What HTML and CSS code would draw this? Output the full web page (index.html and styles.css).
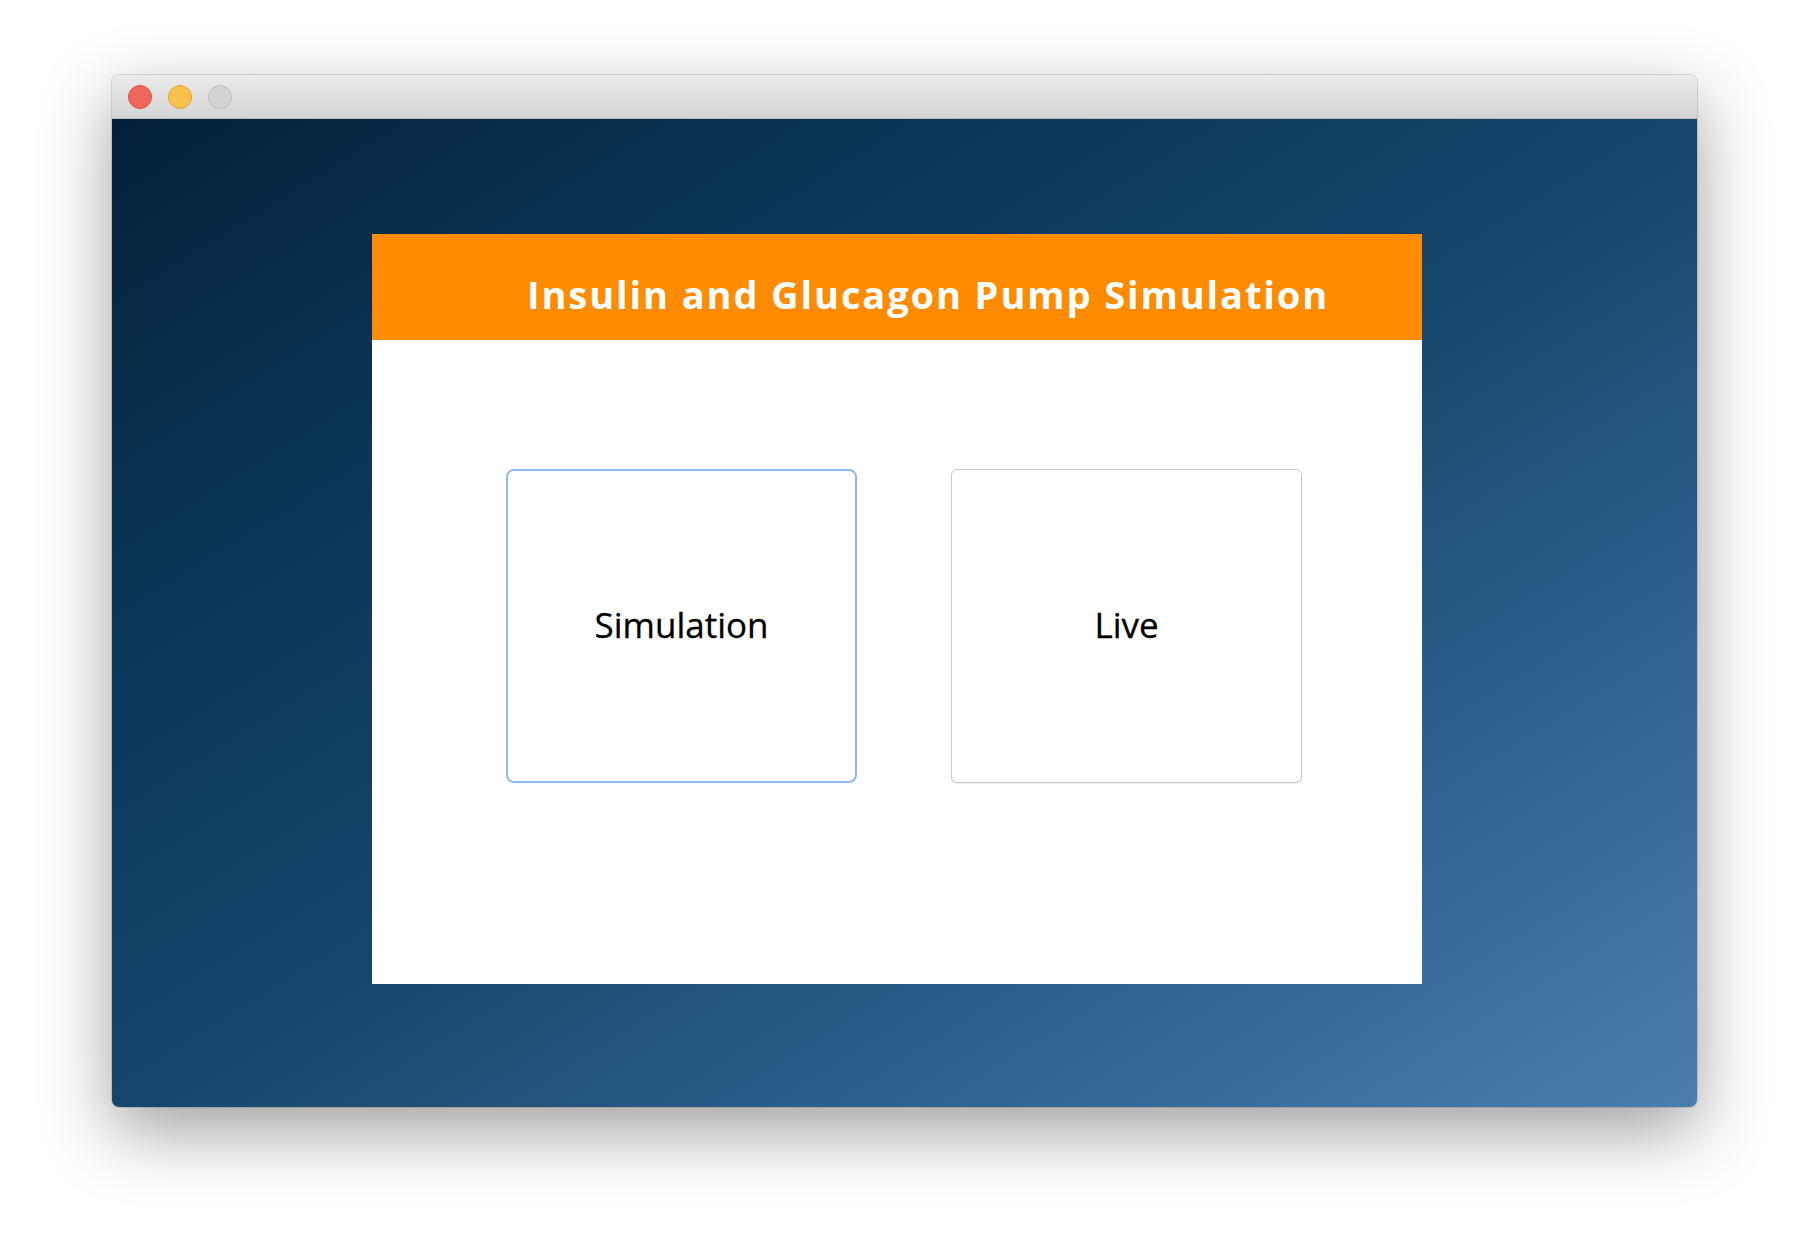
FILE: index.html
```html
<!DOCTYPE html>
<html>
<head>
<meta charset="utf-8">
<link rel="stylesheet" href="styles.css">
</head>
<body>
<div class="window">
  <div class="titlebar">
    <span class="light red"></span>
    <span class="light yellow"></span>
    <span class="light gray"></span>
  </div>
  <div class="content">
    <div class="card">
      <div class="card-header">Insulin and Glucagon Pump Simulation</div>
      <div class="card-body">
        <button class="choice focused">Simulation</button>
        <button class="choice">Live</button>
      </div>
    </div>
  </div>
</div>
</body>
</html>
```
FILE: styles.css
```css
html, body {
  margin: 0;
  padding: 0;
  background: #ffffff;
  width: 1808px;
  height: 1256px;
  overflow: hidden;
}
body {
  padding-top: 75px;
  padding-left: 112px;
  box-sizing: border-box;
  font-family: "Open Sans", "Noto Sans", sans-serif;
}
.window {
  width: 1585px;
  height: 1032px;
  border-radius: 7px;
  overflow: hidden;
  box-shadow: 0 24px 70px rgba(0,0,0,0.38), 0 0 0 1px rgba(0,0,0,0.12);
  display: flex;
  flex-direction: column;
}
.titlebar {
  height: 43px;
  flex: 0 0 43px;
  background: linear-gradient(to bottom, #ebebeb, #d4d4d4);
  border-bottom: 1px solid #b9b9b9;
  display: flex;
  align-items: center;
  padding-left: 16px;
  gap: 16px;
  box-sizing: content-box;
}
.light {
  width: 22px;
  height: 22px;
  border-radius: 50%;
  margin-top: 1px;
}
.red { background: #f0675d; border: 1px solid #d9514a; }
.yellow { background: #f8c24e; border: 1px solid #dea235; }
.gray { background: #d3d3d3; border: 1px solid #bdbdbd; }
.content {
  flex: 1;
  background: linear-gradient(to bottom right, #05203a 0%, #0b3859 28%, #16456a 50%, #2c618e 74%, #4a7fad 100%);
  padding-top: 115px;
  padding-left: 260px;
}
.card {
  width: 1050px;
  height: 750px;
  background: #ffffff;
  display: flex;
  flex-direction: column;
}
.card-header {
  height: 106px;
  flex: 0 0 106px;
  background: #ff8c00;
  color: #ffffff;
  font-weight: 700;
  font-size: 38px;
  letter-spacing: 1.9px;
  display: flex;
  align-items: center;
  padding-left: 155px;
  padding-top: 14px;
  box-sizing: border-box;
}
.card-body {
  flex: 1;
  display: flex;
  align-items: flex-start;
  padding-top: 129px;
  padding-left: 134px;
  gap: 94px;
}
.choice {
  width: 351px;
  height: 314px;
  background: #ffffff;
  border: 1px solid #c9c9c9;
  border-radius: 6px;
  font-family: "Open Sans", "Noto Sans", sans-serif;
  font-size: 35px;
  color: #000000;
  padding: 0 0 4px 0;
  box-sizing: border-box;
  box-shadow: 0 1px 1px rgba(0,0,0,0.08);
  -webkit-text-stroke: 0.3px #000000;
}
.choice.focused {
  border: 2.5px solid #8cbcf0;
  border-radius: 8px;
  box-shadow: none;
}
```
